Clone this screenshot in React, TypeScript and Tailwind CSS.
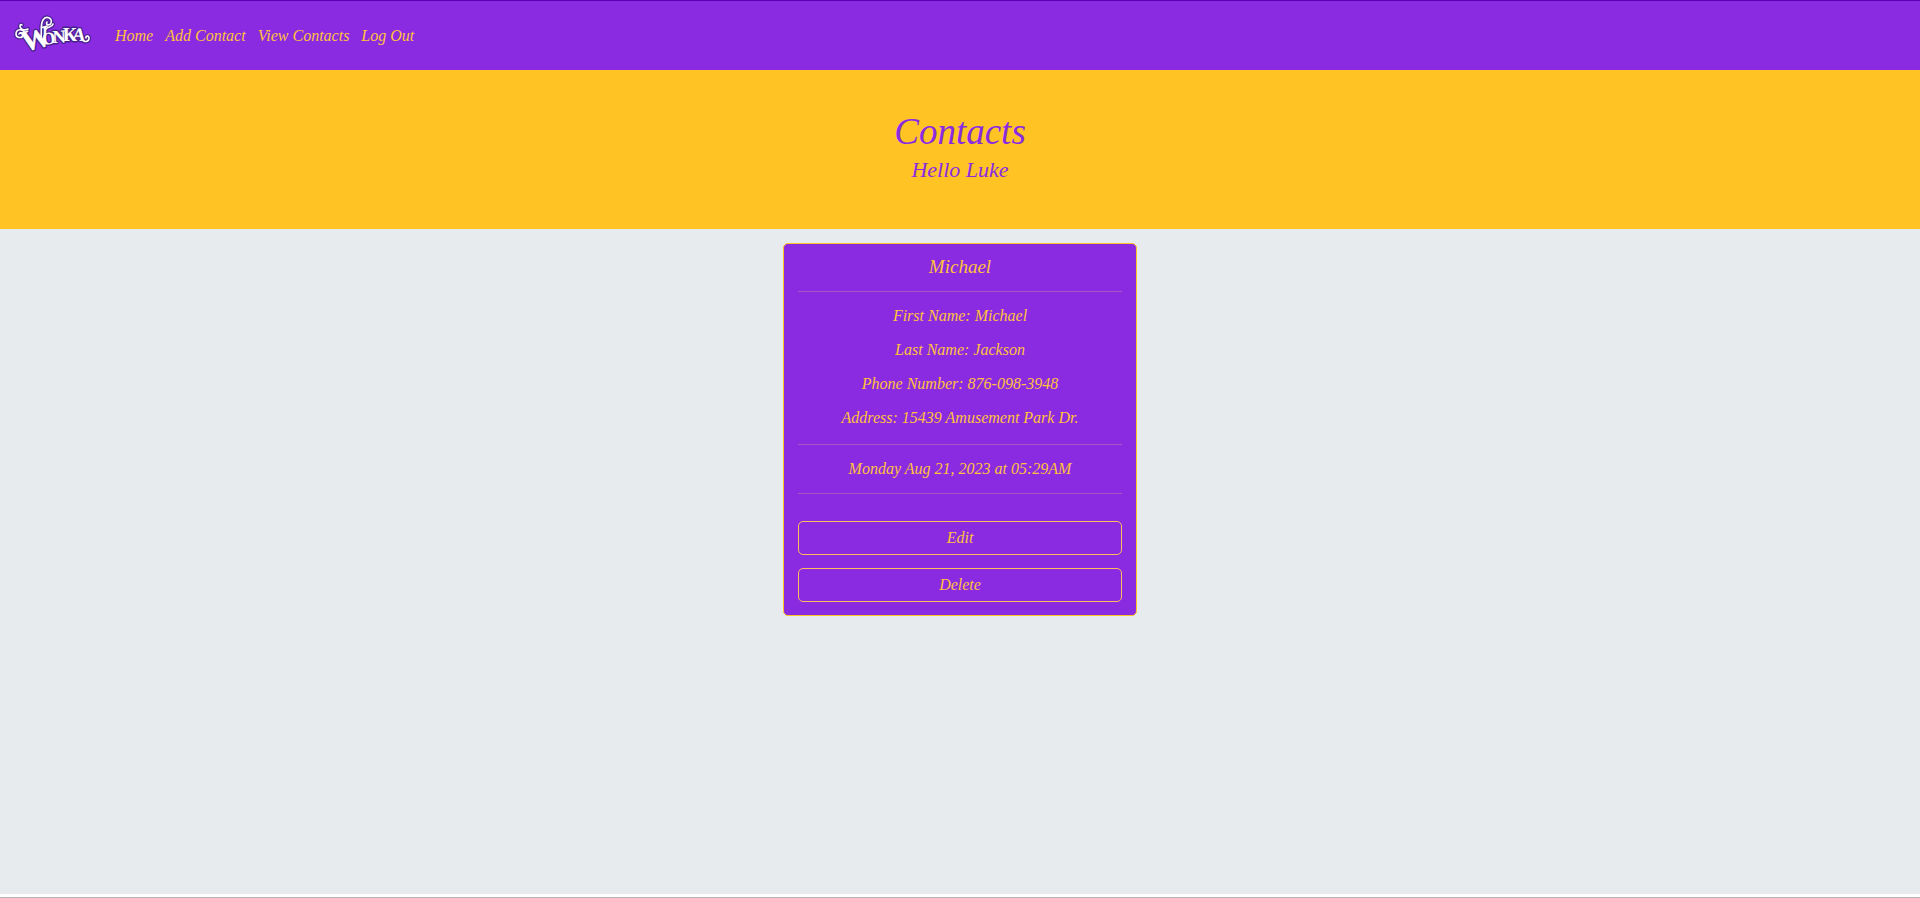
import React from "react";

const links = ["Home", "Add Contact", "View Contacts", "Log Out"];

const details = [
  { label: "First Name", value: "Michael" },
  { label: "Last Name", value: "Jackson" },
  { label: "Phone Number", value: "876-098-3948" },
  { label: "Address", value: "15439 Amusement Park Dr." },
];

const letters = [
  { char: "W", x: 24, y: 51, size: 30, angle: -15 },
  { char: "O", x: 43, y: 44, size: 17, angle: -8 },
  { char: "N", x: 53, y: 42, size: 18, angle: -3 },
  { char: "K", x: 63, y: 40, size: 18, angle: 0 },
  { char: "A", x: 72, y: 39, size: 18, angle: 5 },
];

const swirls = [
  "M28 28C24 30 20 28 20 25C20 24 21 23 22 24",
  "M25 32C23 27 16 28 16 33C16 37 22 38 23 34C23 32 20 31 19 33",
  "M41 36C42 30 40 24 43 19C46 14 53 17 51 22C50 25 45 24 47 21",
  "M46 28C48 25 52 27 53 23",
  "M82 38C84 42 89 41 89 37C89 34 85 35 86 37",
];

function Logo() {
  return (
    <svg viewBox="0 0 110 70" className="h-[70px] w-[110px] shrink-0 not-italic" role="img" aria-label="Wonka">
      {["#4a2090", "#ffffff"].map((color, layer) => (
        <g key={color} stroke={color} strokeLinejoin="round" strokeLinecap="round" strokeWidth={layer ? 0.2 : 3}>
          {swirls.map((d) => (
            <path key={d} d={d} fill="none" strokeWidth={layer ? 1.6 : 4} />
          ))}
          <g fill={color} fontFamily="Liberation Serif, serif" fontWeight="bold">
            {letters.map((l) => (
              <text key={l.char} x={l.x} y={l.y} fontSize={l.size} transform={`rotate(${l.angle} ${l.x} ${l.y})`}>
                {l.char}
              </text>
            ))}
          </g>
        </g>
      ))}
    </svg>
  );
}

export default function App() {
  return (
    <div className="flex min-h-screen flex-col bg-[#e7ebee] font-['Georgia','Liberation_Serif',serif] text-[16px] leading-[22px] text-[#ffc23c] italic">
      <nav className="flex h-[70px] items-center border-t border-[#5b00b4] bg-[#8a2be2]">
        <a href="#home" className="shrink-0">
          <Logo />
        </a>
        <ul className="flex gap-3 pl-[5px]">
          {links.map((link) => (
            <li key={link}>
              <a href="#page">{link}</a>
            </li>
          ))}
        </ul>
      </nav>
      <header className="flex flex-col items-center bg-[#ffc423] pt-10 pb-11 text-[#8a2be2]">
        <h1 className="text-[37px] leading-[44px]">Contacts</h1>
        <p className="text-[22px] leading-[31px]">Hello Luke</p>
      </header>
      <main className="flex grow flex-col items-center px-4 pt-[14px]">
        <article className="w-full max-w-[354px] rounded-[5px] border border-[#ffc423] bg-[#8a2be2] px-[14px] pt-3 pb-[13px] text-center">
          <h2 className="text-[19px] leading-[22px]">Michael</h2>
          <hr className="my-[13px] border-[#a856c0]" />
          <div className="flex flex-col gap-3 pb-[2px]">
            {details.map((d) => (
              <p key={d.label}>
                {d.label}: {d.value}
              </p>
            ))}
          </div>
          <hr className="my-[13px] border-[#a856c0]" />
          <p>Monday Aug 21, 2023 at 05:29AM</p>
          <hr className="my-[13px] border-[#a856c0]" />
          <div className="flex flex-col gap-[13px] pt-[14px]">
            <button className="h-[34px] rounded-[5px] border border-[#ffbd5a]">Edit</button>
            <button className="h-[34px] rounded-[5px] border border-[#ffbd5a]">Delete</button>
          </div>
        </article>
      </main>
      <footer className="h-1 border-b border-[#b5b5b5] bg-white" />
    </div>
  );
}
